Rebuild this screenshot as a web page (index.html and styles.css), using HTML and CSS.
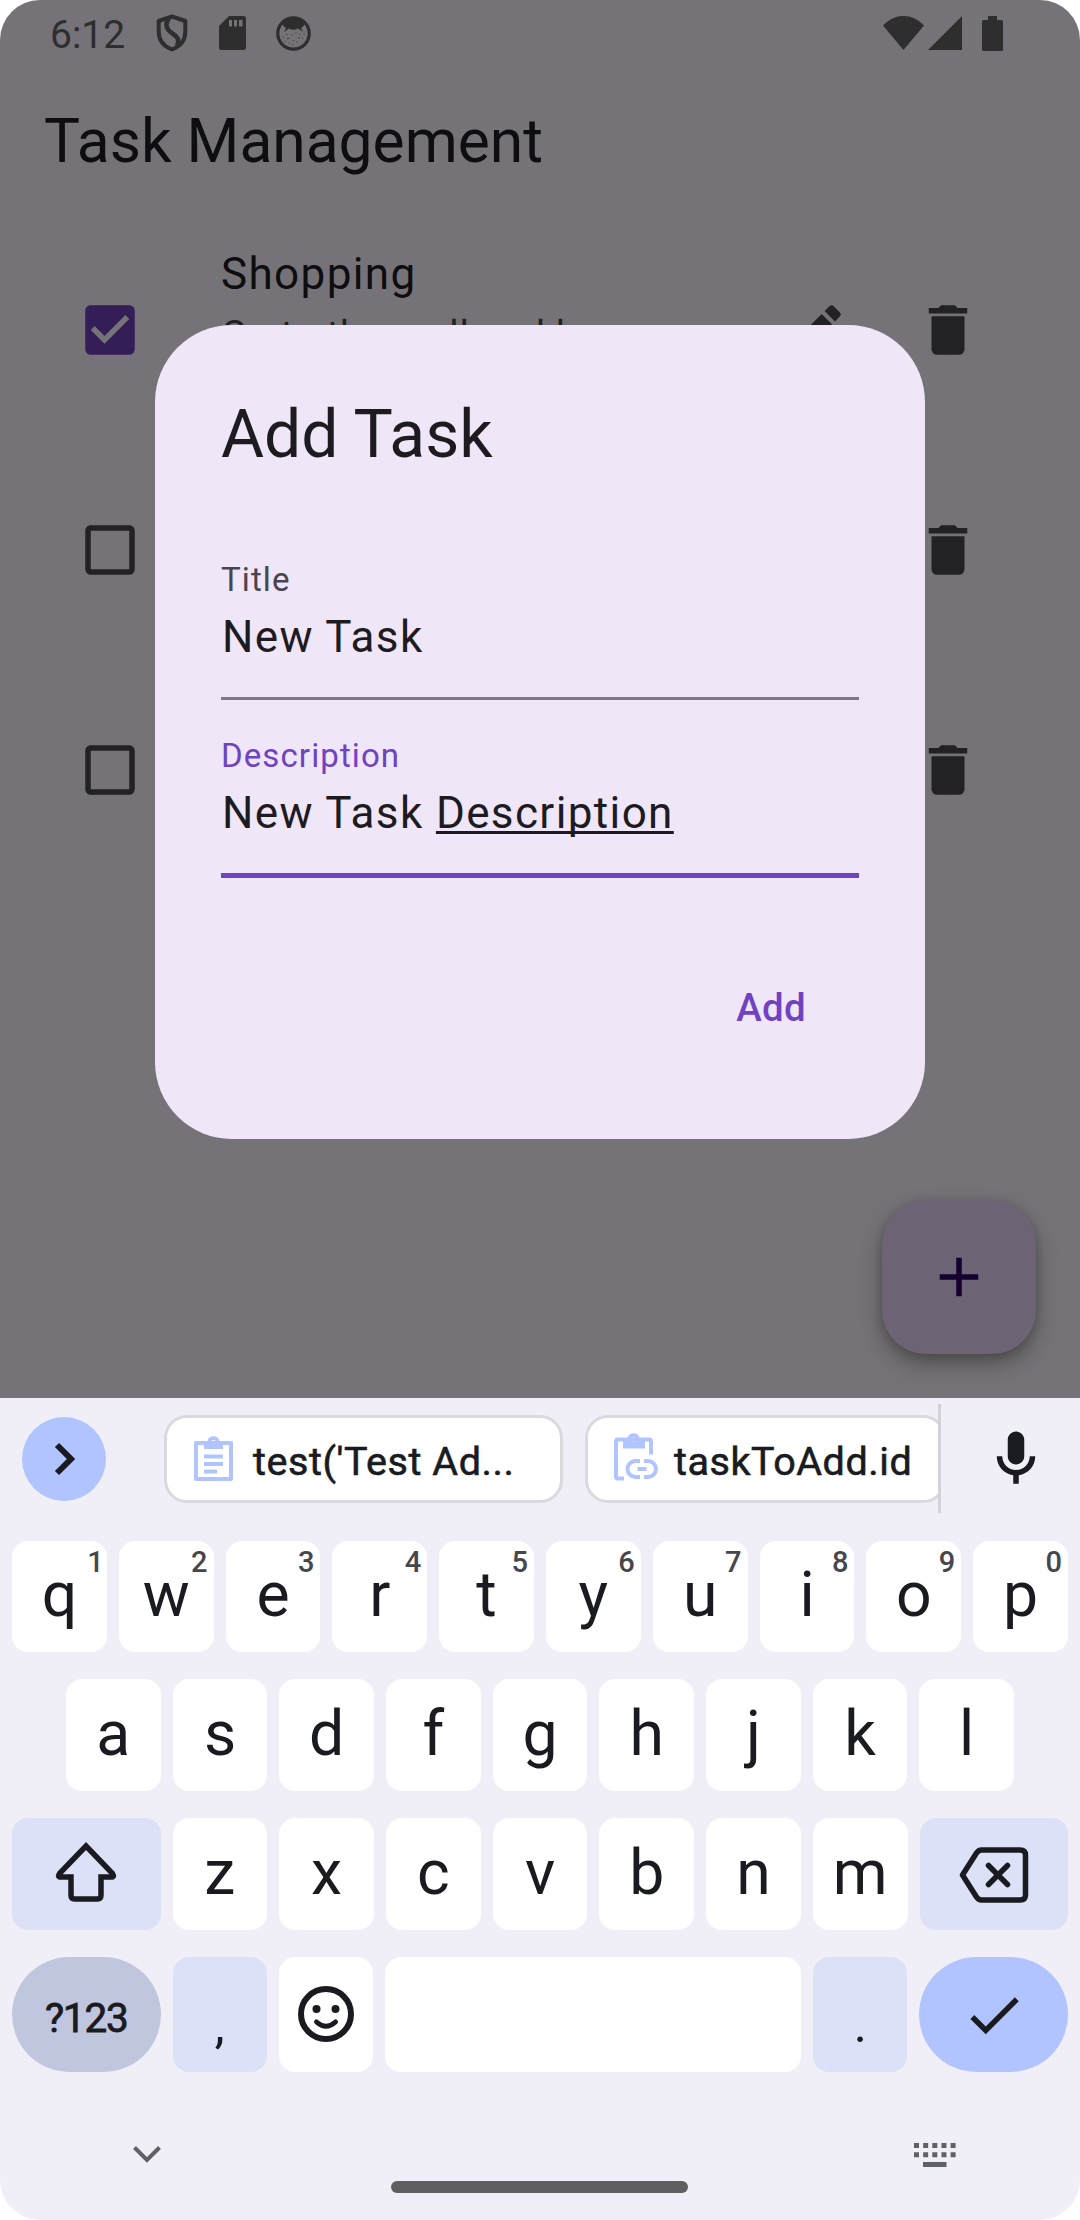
FILE: index.html
```html
<!DOCTYPE html>
<html lang="en">
<head>
<meta charset="utf-8">
<title>Task Management</title>
<link rel="stylesheet" href="styles.css">
</head>
<body>
<svg class="defs" width="0" height="0" aria-hidden="true">
  <symbol id="box-empty" viewBox="0 0 24 24"><path d="M19,3H5C3.89,3 3,3.89 3,5V19A2,2 0 0,0 5,21H19A2,2 0 0,0 21,19V5C21,3.89 20.1,3 19,3M19,5V19H5V5H19Z"/></symbol>
  <symbol id="box-checked" viewBox="0 0 24 24"><path d="M10,17L5,12L6.41,10.58L10,14.17L17.59,6.58L19,8M19,3H5C3.89,3 3,3.89 3,5V19A2,2 0 0,0 5,21H19A2,2 0 0,0 21,19V5C21,3.89 20.1,3 19,3Z"/></symbol>
  <symbol id="pencil" viewBox="0 0 24 24"><path d="M20.71,7.04C21.1,6.65 21.1,6 20.71,5.63L18.37,3.29C18,2.9 17.35,2.9 16.96,3.29L15.12,5.12L18.87,8.87M3,17.25V21H6.75L17.81,9.93L14.06,6.18L3,17.25Z"/></symbol>
  <symbol id="trash" viewBox="0 0 24 24"><path d="M19,4H15.5L14.5,3H9.5L8.5,4H5V6H19M6,19A2,2 0 0,0 8,21H16A2,2 0 0,0 18,19V7H6V19Z"/></symbol>
</svg>
<div class="screen">
  <main class="app">
    <header class="status">
      <span class="clock">6:12</span>
      <svg class="shield" viewBox="0 0 32 38"><g fill="none" stroke="currentColor" stroke-width="4" stroke-linejoin="round"><path d="M16 2.5L29.3 7V17.500C29.300 26.500 24 32.500 16 35.500C8 32.500 2.700 26.500 2.700 17.500V7Z"/><path d="M13.500 3.500C9 9 9.500 14 14.500 18C20 22.300 24.500 24 21 32" stroke-width="4.500"/></g></svg>
      <svg class="sdcard" viewBox="0 0 27 34"><path fill="currentColor" fill-rule="evenodd" d="M10 0H24.500Q27 0 27 2.500V31.500Q27 34 24.500 34H2.500Q0 34 0 31.500V10ZM10 4V10.500H13V4ZM15 4V10.500H18V4ZM20 4V10.500H23.500V4Z"/></svg>
      <svg class="face" viewBox="0 0 35 35"><circle cx="17.500" cy="17.500" r="15.700" fill="none" stroke="currentColor" stroke-width="3.200"/><path fill="currentColor" d="M6 6Q17.500-1 29 6Q28 11 25 12L27 16L22 12.500Q17.500 15 13 12.500L8 16L10 12Q7 11 6 6Z"/><g fill="currentColor"><circle cx="7.500" cy="21" r=".6"/><circle cx="11" cy="18.500" r=".6"/><circle cx="12" cy="22.500" r=".8"/><circle cx="16" cy="19" r=".6"/><circle cx="20" cy="17" r=".6"/><circle cx="24" cy="18.500" r=".6"/><circle cx="28" cy="18" r=".6"/><circle cx="23" cy="22" r=".8"/><circle cx="26.500" cy="22" r=".6"/><circle cx="17.500" cy="24.500" r=".6"/><circle cx="13" cy="27" r=".6"/><circle cx="21" cy="26" r=".6"/><circle cx="17" cy="28.500" r=".6"/><circle cx="9" cy="25" r=".6"/></g></svg>
      <span class="grow"></span>
      <svg class="wifi" viewBox="0 0 41 34"><path fill="currentColor" d="M0 9.500Q8.500 0 20.500 0Q32.500 0 41 9.500L20.500 34Z"/></svg>
      <svg class="signal" viewBox="0 0 34 34"><path fill="currentColor" d="M34 0V34H0Z"/></svg>
      <svg class="battery" viewBox="0 0 21 35"><path fill="currentColor" d="M6 0H15V4H19.500Q21 4 21 5.500V33.500Q21 35 19.500 35H1.500Q0 35 0 33.500V5.500Q0 4 1.500 4H6Z"/></svg>
    </header>
    <div class="appbar"><h1>Task Management</h1></div>
    <ul class="tasks">
      <li class="task">
        <svg class="icon check-on"><use href="#box-checked"/></svg>
        <div class="task-text"><p class="task-title">Shopping</p><p class="task-desc">Go to the mall and buy<br>&nbsp;</p></div>
        <svg class="icon edit"><use href="#pencil"/></svg>
        <svg class="icon"><use href="#trash"/></svg>
      </li>
      <li class="task">
        <svg class="icon"><use href="#box-empty"/></svg>
        <div class="task-text"></div>
        <svg class="icon edit"><use href="#pencil"/></svg>
        <svg class="icon"><use href="#trash"/></svg>
      </li>
      <li class="task">
        <svg class="icon"><use href="#box-empty"/></svg>
        <div class="task-text"></div>
        <svg class="icon edit"><use href="#pencil"/></svg>
        <svg class="icon"><use href="#trash"/></svg>
      </li>
    </ul>
    <div class="fab"><svg class="icon" viewBox="0 0 24 24"><path d="M19,13H13V19H11V13H5V11H11V5H13V11H19V13Z"/></svg></div>
    <section class="dialog">
      <h2>Add Task</h2>
      <div class="field">
        <div class="label">Title</div>
        <div class="value">New Task</div>
      </div>
      <div class="field focused">
        <div class="label">Description</div>
        <div class="value">New Task <span class="composing">Description</span></div>
      </div>
      <div class="actions"><span class="add">Add</span></div>
    </section>
  </main>
  <section class="keyboard">
    <div class="strip">
      <div class="expand"><svg viewBox="0 0 84 84"><path d="M35 28L49 42L35 56" fill="none" stroke="currentColor" stroke-width="6"/></svg></div>
      <div class="chips">
        <div class="chip first">
          <svg class="clip" viewBox="0 0 39 45"><path fill="none" stroke="currentColor" stroke-width="4" stroke-linejoin="round" d="M2 7H37V43H2Z"/><path fill="currentColor" fill-rule="evenodd" d="M10 5H13.500A6.200 6.200 0 0 1 25.500 5H29V13H10ZM19.500 4A2.400 2.400 0 1 0 19.500 8.800A2.400 2.400 0 1 0 19.500 4ZM10 18.500H29V22.500H10ZM10 26H29V30H10ZM10 33.500H23V37.500H10Z"/></svg>
          <span>test('Test Ad...</span>
        </div>
        <div class="chip second">
          <svg class="cliplink" viewBox="0 0 44 48"><g fill="none" stroke="currentColor" stroke-width="4"><path d="M10 45.500H4Q2 45.500 2 43.500V8.500Q2 6.500 4 6.500H35Q37 6.500 37 8.500V21.500" stroke-linejoin="round"/><path d="M26 28H21.500A8 8 0 0 0 21.500 44H26M30 28H34A8 8 0 0 1 34 44H30M23.500 36H32.500"/></g><path fill="currentColor" fill-rule="evenodd" d="M9 5H13.500A6.200 6.200 0 0 1 25.500 5H31V15.500H9ZM19.500 4A2.400 2.400 0 1 0 19.500 8.800A2.400 2.400 0 1 0 19.500 4Z"/></svg>
          <span>taskToAdd.id</span>
        </div>
      </div>
      <div class="mic"><svg class="icon" viewBox="0 0 24 24"><path d="M12 14c1.660 0 3-1.340 3-3V5c0-1.660-1.340-3-3-3S9 3.340 9 5v6c0 1.660 1.340 3 3 3zm5-3c0 2.760-2.240 5-5 5s-5-2.240-5-5H5c0 3.530 2.610 6.430 6 6.920V21h2v-3.080c3.390-.49 6-3.390 6-6.920h-2z"/></svg></div>
    </div>
    <div class="rows">
      <div class="row top">
        <div class="key">q<sup>1</sup></div><div class="key">w<sup>2</sup></div><div class="key">e<sup>3</sup></div><div class="key">r<sup>4</sup></div><div class="key">t<sup>5</sup></div><div class="key">y<sup>6</sup></div><div class="key">u<sup>7</sup></div><div class="key">i<sup>8</sup></div><div class="key">o<sup>9</sup></div><div class="key">p<sup>0</sup></div>
      </div>
      <div class="row home">
        <div class="key">a</div><div class="key">s</div><div class="key">d</div><div class="key">f</div><div class="key">g</div><div class="key">h</div><div class="key">j</div><div class="key">k</div><div class="key">l</div>
      </div>
      <div class="row">
        <div class="key tint wide"><svg class="shift" viewBox="0 0 62 60"><path d="M31 4L57.500 31.500Q60 35 56 35H46V53Q46 57 42.500 57H19.500Q16 57 16 53V35H6Q2 35 4.500 31.500Z" fill="none" stroke="currentColor" stroke-width="5.500"/></svg></div>
        <div class="key">z</div><div class="key">x</div><div class="key">c</div><div class="key">v</div><div class="key">b</div><div class="key">n</div><div class="key">m</div>
        <div class="key tint wide"><svg class="bksp" viewBox="0 0 70 56"><g fill="none" stroke="currentColor" stroke-width="5.500"><path d="M3.500 28L17.500 6Q19.500 3 22.500 3H61Q66.500 3 66.500 8V48Q66.500 53 61 53H22.500Q19.500 53 17.500 50Z" stroke-linejoin="round"/><path d="M29.500 18.500L48.500 37.500M48.500 18.500L29.500 37.500" stroke-linecap="round"/></g></svg></div>
      </div>
      <div class="row bottom">
        <div class="key symbols wide">?123</div>
        <div class="key tint punct">,</div>
        <div class="key"><svg class="emoji" viewBox="0 0 56 56"><circle cx="28" cy="28" r="25" fill="none" stroke="currentColor" stroke-width="6"/><circle cx="18.500" cy="23" r="4" fill="currentColor"/><circle cx="37.500" cy="23" r="4" fill="currentColor"/><path d="M18.500 36Q28 44.500 37.500 36" fill="none" stroke="currentColor" stroke-width="5" stroke-linecap="round"/></svg></div>
        <div class="key space"></div>
        <div class="key tint punct">.</div>
        <div class="key enter wide"><svg class="icon" viewBox="0 0 24 24"><path d="M9 16.170L4.830 12l-1.420 1.410L9 19 21 7l-1.410-1.410z"/></svg></div>
      </div>
    </div>
    <nav class="navbar">
      <svg class="hide" viewBox="0 0 28 17"><path d="M1.500 1.500L14 14L26.500 1.500" fill="none" stroke="currentColor" stroke-width="4"/></svg>
      <div class="handle"></div>
      <svg class="ime" viewBox="0 0 42 24"><path d="M0 2.500H42M0 11.700H42" fill="none" stroke="currentColor" stroke-width="5" stroke-dasharray="5 4.150"/><path d="M9 19H32.500V24H9Z" fill="currentColor"/></svg>
    </nav>
  </section>
</div>
</body>
</html>
```
FILE: styles.css
```css
* { box-sizing: border-box; }
body { margin: 0; background: #fff; font-family: Roboto, "Liberation Sans", sans-serif; }
h1, h2, p, ul { margin: 0; padding: 0; font-weight: 400; }
svg { display: block; flex: none; }
.defs { position: absolute; }
.icon { width: 66px; height: 66px; fill: currentColor; }

.screen { width: 1080px; height: 2220px; border-radius: 40px; overflow: hidden; display: flex; flex-direction: column; }
.app { position: relative; height: 1398px; background: #757377; color: #222125; }

.status { height: 64px; display: flex; align-items: center; padding: 2px 77px 0 50px; color: #2e2e2e; }
.clock { font-size: 39px; width: 106px; padding-top: 4px; }
.shield { width: 32px; height: 38px; margin-right: 31px; }
.sdcard { width: 27px; height: 34px; margin-right: 30px; }
.face { width: 35px; height: 35px; }
.grow { flex: 1; }
.wifi { width: 41px; height: 34px; margin-right: 4px; }
.signal { width: 34px; height: 34px; margin-right: 20px; }
.battery { width: 21px; height: 35px; }

.appbar { height: 156px; display: flex; align-items: center; padding: 0 0 2px 44px; color: #0e0e10; }
.appbar h1 { font-size: 60.5px; line-height: 77px; }

.tasks { list-style: none; }
.task { height: 220px; display: flex; align-items: center; padding: 0 99px 0 77px; }
.check-on { color: #331e58; }
.task-text { flex: 1; padding: 0 0 2px 78px; letter-spacing: 0.7px; }
.task-title { font-size: 44px; line-height: 66px; letter-spacing: 1.375px; color: #0e0e10; }
.task-desc { font-size: 38.5px; line-height: 55px; }
.edit { margin-right: 66px; }

.fab { position: absolute; left: 882px; top: 1200px; width: 154px; height: 154px; border-radius: 44px; background: #6c6475; color: #15002e; display: flex; align-items: center; justify-content: center; box-shadow: 0 10px 22px rgba(30, 32, 26, .4), 0 3px 8px rgba(30, 32, 26, .2); }

.dialog { position: absolute; left: 155px; top: 325px; width: 770px; height: 814px; border-radius: 77px; background: #efe6f7; color: #1d1b1f; padding: 66px; }
.dialog h2 { font-size: 66px; line-height: 88px; margin-bottom: 66px; }
.field { height: 155px; margin-bottom: 21px; padding-top: 13px; border-bottom: 3px solid #7e7883; }
.field.focused { height: 156.500px; margin-bottom: 22px; border-bottom: 5.500px solid #6f43c0; }
.label { font-size: 33px; line-height: 44px; letter-spacing: 1.1px; color: #49454e; margin-bottom: 2px; }
.focused .label { color: #6f43c0; }
.value { font-size: 44px; line-height: 66px; letter-spacing: 1.375px; padding-left: 1px; }
.composing { text-decoration: underline; text-decoration-thickness: 3px; text-underline-offset: 3px; text-decoration-skip-ink: none; }
.actions { display: flex; justify-content: flex-end; padding: 80px 53px 0 0; }
.add { font-size: 38.5px; line-height: 55px; font-weight: 500; color: #6f43c0; letter-spacing: 0.275px; }

.keyboard { height: 822px; background: #f0eff7; color: #1a1b20; }
.strip { height: 121px; display: flex; align-items: center; padding-left: 22px; }
.expand { width: 84px; height: 84px; border-radius: 50%; background: #b1c4ff; margin-right: 58px; }
.chips { width: 774px; display: flex; gap: 22px; overflow: hidden; }
.chip { flex: none; height: 88px; display: flex; align-items: center; border: 3px solid #d9d9de; border-radius: 23px; background: #fff; font-size: 39.5px; letter-spacing: 0.55px; -webkit-text-stroke: 0.6px currentColor; }
.chip svg { color: #b1c4ff; }
.chip span { padding-top: 6px; }
.chip.first { width: 399px; padding-left: 27px; }
.chip.second { width: 361px; padding-left: 26px; }
.clip { width: 39px; height: 45px; margin-right: 20px; }
.cliplink { width: 44px; height: 48px; margin: 0 16px 3px 0; }
.mic { border-left: 3px solid #d2d2d8; height: 109px; flex: 1; display: flex; align-items: center; padding-left: 42px; }

.rows { display: flex; flex-direction: column; gap: 27px; padding: 22px 12px 0; }
.row { display: flex; gap: 12px; height: 112px; }
.row.top { height: 111px; }
.row.home { padding: 0 54px; }
.row.bottom { height: 115px; }
.key { position: relative; flex: 1 1 0; min-width: 0; display: flex; align-items: center; justify-content: center; border-radius: 16px; background: #fff; font-size: 62.500px; line-height: 110px; padding-bottom: 3px; }
.key sup { position: absolute; top: 6px; right: 6px; font-size: 29px; line-height: 30px; font-weight: 500; color: #46474d; }
.key:first-child sup { right: 3px; }
.tint { background: #dde1f8; }
.wide { flex: 0 0 148.500px; }
.symbols { border-radius: 58px; background: #c1c6df; font-size: 40.5px; letter-spacing: -1.2px; -webkit-text-stroke: 0.8px currentColor; padding: 6px 0 0; }
.enter { border-radius: 58px; background: #b1c4ff; padding: 0; }
.punct { font-size: 50px; padding: 20px 0 0; }
.space { flex: 0 0 416px; }
.shift { width: 62px; height: 60px; margin-bottom: 1px; }
.bksp { width: 70px; height: 56px; margin: 5px 0 0 0; }
.emoji { width: 56px; height: 56px; margin-top: 2px; }

.navbar { height: 148px; display: flex; align-items: flex-start; color: #606164; padding-left: 133px; }
.hide { width: 28px; height: 17px; margin-top: 74px; }
.handle { width: 297px; height: 12px; border-radius: 6px; background: #5f5f62; margin: 109px 226px 0 230px; }
.ime { width: 42px; height: 24px; margin-top: 71px; }
```
